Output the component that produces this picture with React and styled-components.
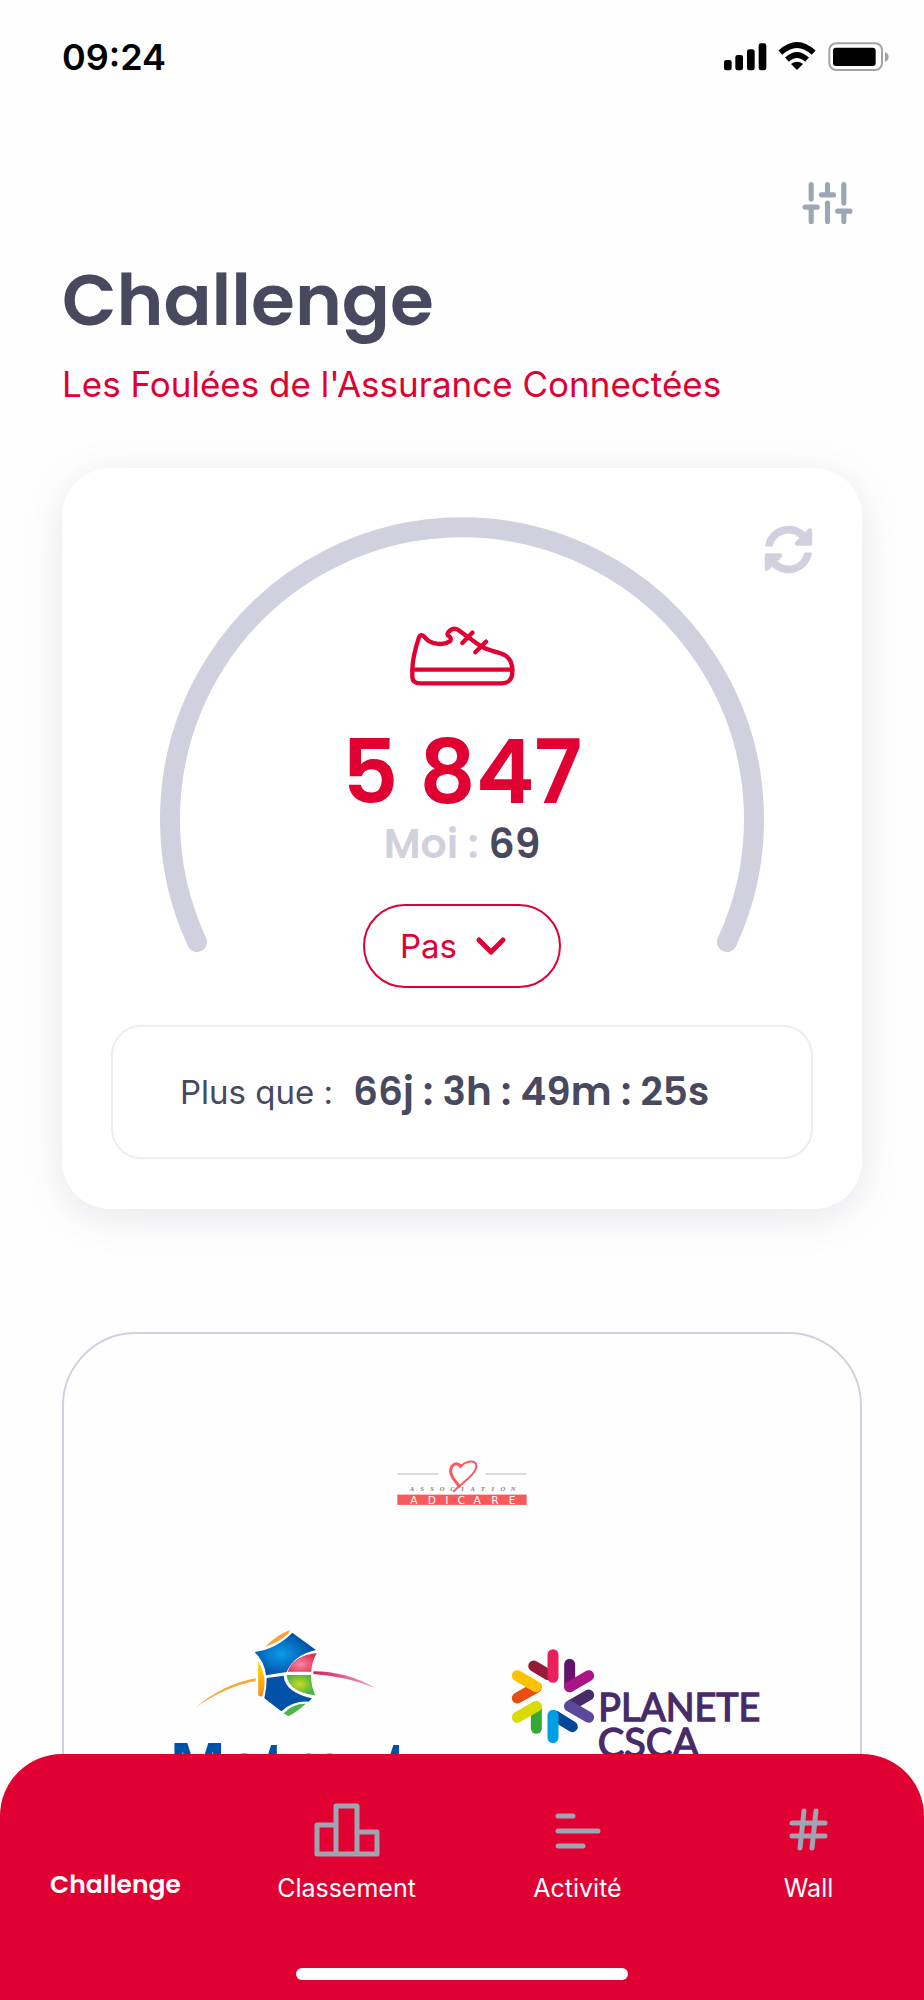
import React from "react";
import styled, { createGlobalStyle } from "styled-components";
import { FaSyncAlt } from "react-icons/fa";

const colors = {
  red: "#e00032",
  ink: "#48485e",
  mist: "#d0d0de",
  slate: "#9ca6b4",
  line: "#ededf2",
};

const GlobalStyle = createGlobalStyle`
  *, *::before, *::after { box-sizing: border-box; }
  body {
    margin: 0;
    background: #fefefe;
    color: ${colors.ink};
    font-family: Inter, "Liberation Sans", sans-serif;
  }
`;

const Screen = styled.div`
  display: flex;
  flex-direction: column;
  height: 100vh;
  overflow: hidden;
`;

const StatusBar = styled.div`
  display: flex;
  flex: none;
  align-items: center;
  justify-content: space-between;
  height: 114px;
  padding: 0 35px 0 62px;
  color: #000;
`;

const Clock = styled.time`
  font-size: 36px;
  font-weight: 600;
  line-height: 44px;
`;

const StatusIcons = styled.svg`
  width: 165px;
  height: 30px;
`;

const Content = styled.main`
  flex: 1;
  min-height: 0;
  padding: 64px 62px 0;
  overflow-y: auto;
  scrollbar-width: none;
`;

const Toolbar = styled.div`
  display: flex;
  justify-content: flex-end;
  padding-right: 10px;
`;

const IconButton = styled.button`
  display: flex;
  padding: 0;
  border: 0;
  background: none;
  color: ${colors.slate};
  cursor: pointer;
`;

const Title = styled.h1`
  margin: 30px 0 20px;
  font-family: Poppins, Inter, sans-serif;
  font-size: 71px;
  font-weight: 600;
  line-height: 84px;
`;

const Subtitle = styled.p`
  margin: 0;
  color: ${colors.red};
  font-size: 35px;
  line-height: 44px;
`;

const ScoreCard = styled.section`
  position: relative;
  margin-top: 62px;
  padding: 48px 49px 50px;
  border-radius: 48px;
  background: #fff;
  box-shadow: 0 8px 40px rgba(72, 80, 110, 0.13);
`;

const RefreshButton = styled(IconButton)`
  position: absolute;
  top: 57px;
  right: 49px;
  color: ${colors.mist};
`;

const Gauge = styled.div`
  display: grid;
  justify-content: center;

  > * {
    grid-area: 1 / 1;
  }
`;

const GaugeArc = styled.svg`
  width: 604px;
  max-width: 100%;
`;

const GaugeContent = styled.div`
  display: flex;
  flex-direction: column;
  align-items: center;
  padding-top: 110px;
`;

const Score = styled.strong`
  margin-top: 43px;
  color: ${colors.red};
  font-family: Poppins, Inter, sans-serif;
  font-size: 88px;
  font-weight: 600;
  line-height: 88px;
`;

const Mine = styled.p`
  margin: 3px 0 36px;
  color: ${colors.mist};
  font-family: Poppins, Inter, sans-serif;
  font-size: 41px;
  font-weight: 600;
  line-height: 48px;

  b {
    color: ${colors.ink};
    font-weight: 600;
  }
`;

const UnitPicker = styled.div`
  position: relative;

  svg {
    position: absolute;
    top: 32px;
    right: 53px;
    pointer-events: none;
  }
`;

const UnitSelect = styled.select`
  display: block;
  width: 198px;
  height: 84px;
  padding: 0 35px;
  appearance: none;
  border: 2px solid ${colors.red};
  border-radius: 42px;
  background: transparent;
  color: ${colors.red};
  font-family: inherit;
  font-size: 33px;
`;

const Countdown = styled.div`
  display: flex;
  align-items: center;
  gap: 20px;
  margin-top: 37px;
  padding: 41px 67px;
  border: 2px solid ${colors.line};
  border-radius: 30px;
  white-space: nowrap;
`;

const CountdownLabel = styled.span`
  font-size: 33px;
  line-height: 48px;
`;

const CountdownValue = styled.span`
  font-family: Poppins, Inter, sans-serif;
  font-size: 39px;
  font-weight: 600;
  line-height: 48px;
`;

const Sponsors = styled.section`
  display: grid;
  grid-template-columns: 1fr 1fr;
  justify-items: center;
  row-gap: 122px;
  margin-top: 123px;
  padding: 126px 48px;
  border: 2px solid ${colors.mist};
  border-radius: 74px;

  > :first-child {
    grid-column: 1 / -1;
  }
`;

const NavBar = styled.nav`
  display: flex;
  flex: none;
  flex-direction: column;
  padding: 40px 0 20px;
  border-radius: 62px 62px 0 0;
  background: ${colors.red};
`;

const Tabs = styled.div`
  display: grid;
  grid-template-columns: repeat(4, 1fr);
`;

const Tab = styled.a`
  display: flex;
  flex-direction: column;
  align-items: center;
  color: #fff;
  font-family: ${(p) => (p.$active ? "Poppins, Inter, sans-serif" : "inherit")};
  font-size: 25px;
  font-weight: ${(p) => (p.$active ? 600 : 400)};
  line-height: ${(p) => (p.$active ? "30px" : "36px")};
  text-decoration: none;
`;

const TabIcon = styled.span`
  display: flex;
  align-items: center;
  justify-content: center;
  height: 72px;
  margin-bottom: 4px;
  color: #a0a3b1;
`;

const HomeIndicator = styled.div`
  width: 36%;
  height: 12px;
  margin: 62px auto 0;
  border-radius: 6px;
  background: #fff;
`;

function SignalIcons() {
  return (
    <StatusIcons viewBox="103 66 495 90" aria-hidden="true">
      <rect x="103" y="120" width="23" height="31" rx="7" />
      <rect x="137" y="105" width="23" height="46" rx="7" />
      <rect x="172" y="88" width="23" height="63" rx="7" />
      <rect x="207" y="70" width="23" height="81" rx="7" />
      <g fill="none" stroke="#000" strokeWidth="17">
        <path d="M272 98 Q322 52 372 98" />
        <path d="M292 119 Q322 91 352 119" />
      </g>
      <path d="M304 132 Q322 118 340 132 L322 150 Z" />
      <rect x="419" y="70" width="158" height="80" rx="20" fill="none" stroke="#a3a3a3" strokeWidth="6" />
      <rect x="430" y="83" width="128" height="55" rx="9" />
      <path d="M586 96 Q597 101 597 111 Q597 121 586 126 Z" fill="#a3a3a3" />
    </StatusIcons>
  );
}

function SlidersIcon() {
  return (
    <svg width="49" height="50" viewBox="0 0 24 24" fill="none" stroke="currentColor" strokeWidth="2.5" strokeLinecap="round" overflow="visible">
      <path d="M4 21v-7M4 10V3M12 21v-9M12 8V3M20 21v-5M20 12V3M1 14h6M9 8h6M17 16h6" />
    </svg>
  );
}

function ShoeIcon() {
  return (
    <svg width="105" height="60" viewBox="90 78 315 180" fill="none" stroke={colors.red} strokeWidth="13" strokeLinecap="round" strokeLinejoin="round" aria-hidden="true">
      <path d="M97 212C97 178 106 144 117 112Q122 100 133 110C150 134 188 137 208 125Q217 118 208 109Q198 104 206 95Q220 80 235 90L296 134C320 154 350 152 374 165C392 176 398 192 397 215C397 238 385 250 365 250H122Q97 250 97 230Z" />
      <path d="M97 209H397M247 129L277 98M286 157L318 125" />
    </svg>
  );
}

function AdicareLogo() {
  return (
    <svg width="130" height="46" viewBox="50 58 392 138" role="img" aria-label="Association Adicare">
      <path d="M51 100H176M316 100H441" stroke="#999" strokeWidth="2" />
      <rect x="51" y="162" width="390" height="31" fill="#f75a5c" />
      <g fill="none" stroke="#f75a5c" strokeLinecap="round">
        <path d="M243 76C226 60 207 76 213 99C217 118 232 124 237 137" strokeWidth="9" />
        <path d="M239 78C259 61 284 55 289 72C293 97 251 123 222 151" strokeWidth="6" />
      </g>
      <g textAnchor="middle">
        <g fontFamily="Liberation Serif, serif" fontSize="20" fontStyle="italic" fontWeight="700" fill="#808080">
          {"ASSOCIATION".split("").map((c, i) => (
            <text key={i} x={95 + i * 30.5} y="151">{c}</text>
          ))}
        </g>
        <g fontFamily="DejaVu Sans, sans-serif" fontSize="32" fill="#fff">
          {"ADICARE".split("").map((c, i) => (
            <text key={i} x={[101, 155, 200, 244, 292, 345, 397][i]} y="189">{c}</text>
          ))}
        </g>
      </g>
    </svg>
  );
}

function MatmutLogo() {
  return (
    <svg width="250" height="172" viewBox="6 54 750 516" role="img" aria-label="Matmut">
      <defs>
        <radialGradient id="sky" cx="0.43" cy="0.5" r="0.5">
          <stop offset="0" stopColor="#0b9be8" />
          <stop offset="1" stopColor="#0052a8" />
        </radialGradient>
        <radialGradient id="rose" cx="0.45" cy="0.6" r="0.6">
          <stop offset="0" stopColor="#f7889b" />
          <stop offset="1" stopColor="#df2d5d" />
        </radialGradient>
        <radialGradient id="leaf" cx="0.45" cy="0.45" r="0.55">
          <stop offset="0" stopColor="#cbdc1d" />
          <stop offset="1" stopColor="#48b147" />
        </radialGradient>
        <linearGradient id="sun" x1="0" y1="0" x2="0" y2="1">
          <stop offset="0" stopColor="#ffdc00" />
          <stop offset="1" stopColor="#f58a14" />
        </linearGradient>
        <linearGradient id="trail" x1="0" y1="0" x2="1" y2="0">
          <stop offset="0" stopColor="#d81e5b" />
          <stop offset="1" stopColor="#d81e5b" stopOpacity="0.4" />
        </linearGradient>
      </defs>
      <path d="M108 292Q190 222 287 205V213Q198 229 108 292Z" fill="#f6a63a" />
      <path d="M460 184Q560 184 648 235Q555 198 460 192Z" fill="url(#trail)" />
      <path d="M316 110Q348 76 390 60L386 70Q360 96 316 110Z" fill="#f9a334" />
      <path d="M284 126Q350 116 397 68L468 120Q400 136 380 186L318 196Q314 156 284 126Z" fill="url(#sky)" />
      <path d="M470 129Q454 160 454 185H383Q398 138 470 129Z" fill="url(#rose)" />
      <path d="M294 154Q326 206 306 260L295 257Z" fill="url(#sun)" />
      <path d="M320 204L371 197Q374 246 456 265L446 275Q398 272 364 304L313 265Q320 236 320 204Z" fill="#0052a8" />
      <path d="M380 195H453Q453 228 466 256Q385 246 380 195Z" fill="url(#leaf)" />
      <path d="M371 310Q398 280 437 281Q416 302 385 319Z" fill="#4cb748" />
      <text x="30" y="538" fontFamily="Liberation Sans, sans-serif" fontSize="200" fontWeight="700" fill="#0052a8">Matmut</text>
    </svg>
  );
}

const petals = [
  ["#951b3a", "M131 108L175 134"],
  ["#e8215d", "M189 74V142"],
  ["#64146c", "M239 103V170"],
  ["#ab1486", "M296 137L239 170"],
  ["#e74e0f", "M82 204L139 172"],
  ["#fcc200", "M82 137L139 170"],
  ["#36a935", "M139 295V240"],
  ["#dadc00", "M82 262L139 229"],
  ["#00489a", "M247 290L195 258"],
  ["#009fe3", "M189 323V256"],
  ["#472a68", "M296 195L239 228"],
  ["#5b4a9b", "M296 262L239 229"],
];

function PlaneteLogo() {
  return (
    <svg width="252" height="172" viewBox="63 -6 756 516" role="img" aria-label="Planete CSCA">
      <g strokeWidth="33" strokeLinecap="round">
        {petals.map(([color, d]) => (
          <path key={color} d={d} stroke={color} />
        ))}
      </g>
      <g fontFamily="Lato, sans-serif" fill="#472a68" stroke="#472a68" strokeWidth="4">
        <text x="325" y="272" fontSize="113">PLANETE</text>
        <text x="323" y="380" fontSize="119">CSCA</text>
      </g>
    </svg>
  );
}

function PodiumIcon() {
  return (
    <svg width="66" height="54" viewBox="0 0 66 54" fill="none" stroke="currentColor" strokeWidth="5" strokeLinejoin="round">
      <path d="M3 51V22H22V3H43V29H63V51ZM22 22V51M43 29V51" />
    </svg>
  );
}

function ActivityIcon() {
  return (
    <svg width="46" height="38" viewBox="0 0 46 38" stroke="currentColor" strokeWidth="5" strokeLinecap="round">
      <path d="M3 5H18M3 20H43M3 35H28" />
    </svg>
  );
}

function HashIcon() {
  return (
    <svg width="40" height="44" viewBox="0 0 40 44" stroke="currentColor" strokeWidth="5" strokeLinecap="round">
      <path d="M3 15H36M3 28H36M15 3L11 40M27 3L23 40" />
    </svg>
  );
}

const tabs = [
  { label: "Challenge", active: true },
  { label: "Classement", icon: <PodiumIcon /> },
  { label: "Activité", icon: <ActivityIcon /> },
  { label: "Wall", icon: <HashIcon /> },
];

export default function App() {
  return (
    <Screen>
      <GlobalStyle />
      <StatusBar>
        <Clock>09:24</Clock>
        <SignalIcons />
      </StatusBar>
      <Content>
        <Toolbar>
          <IconButton type="button" aria-label="Réglages">
            <SlidersIcon />
          </IconButton>
        </Toolbar>
        <Title>Challenge</Title>
        <Subtitle>Les Foulées de l'Assurance Connectées</Subtitle>

        <ScoreCard>
          <RefreshButton type="button" aria-label="Actualiser">
            <FaSyncAlt size={49} />
          </RefreshButton>
          <Gauge>
            <GaugeArc viewBox="0 0 604 436" fill="none" aria-hidden="true">
              <path d="M37 426A292 292 0 1 1 567 426" stroke={colors.mist} strokeWidth="20" strokeLinecap="round" />
            </GaugeArc>
            <GaugeContent>
              <ShoeIcon />
              <Score>5 847</Score>
              <Mine>
                Moi : <b>69</b>
              </Mine>
              <UnitPicker>
                <UnitSelect aria-label="Unité" defaultValue="pas">
                  <option value="pas">Pas</option>
                </UnitSelect>
                <svg width="34" height="20" viewBox="0 0 34 20" fill="none" stroke={colors.red} strokeWidth="5" strokeLinecap="round" strokeLinejoin="round" aria-hidden="true">
                  <path d="M5 4L17 16L29 4" />
                </svg>
              </UnitPicker>
            </GaugeContent>
          </Gauge>
          <Countdown>
            <CountdownLabel>Plus que :</CountdownLabel>
            <CountdownValue>66j : 3h : 49m : 25s</CountdownValue>
          </Countdown>
        </ScoreCard>

        <Sponsors aria-label="Partenaires">
          <AdicareLogo />
          <MatmutLogo />
          <PlaneteLogo />
        </Sponsors>
      </Content>
      <NavBar>
        <Tabs>
          {tabs.map((t) => (
            <Tab key={t.label} href="#" $active={t.active} aria-current={t.active ? "page" : undefined}>
              <TabIcon>{t.icon}</TabIcon>
              {t.label}
            </Tab>
          ))}
        </Tabs>
        <HomeIndicator />
      </NavBar>
    </Screen>
  );
}
